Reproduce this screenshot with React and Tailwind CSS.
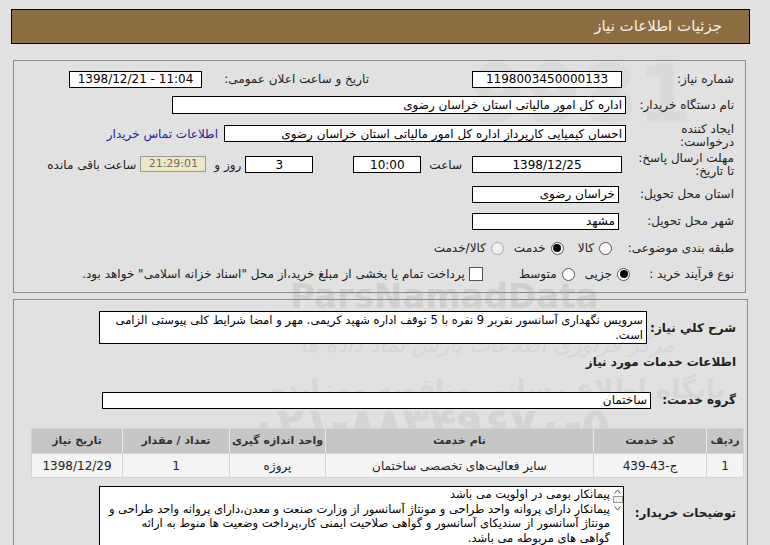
import React from 'react';

const font = { fontFamily: '"DejaVu Sans", Tahoma, sans-serif' };

const Box = ({ w, children, className = '' }) => (
  <div
    className={`h-[17px] bg-white border border-black flex items-center px-[3px] text-[12px] text-black whitespace-nowrap overflow-hidden shrink-0 ${className}`}
    style={{ width: w }}
  >
    {children}
  </div>
);

const Radio = ({ checked, disabled }) => (
  <span
    className={`w-[13px] h-[13px] rounded-full border flex items-center justify-center shrink-0 ${
      disabled ? 'border-[#a8a8a8] bg-[#f0f0f0]' : 'border-[#555] bg-white'
    }`}
  >
    {checked && <span className="w-[8px] h-[8px] rounded-full bg-black" />}
  </span>
);

const Label = ({ children, className = '' }) => (
  <div className={`w-[104px] shrink-0 whitespace-nowrap text-[12px] leading-[13px] text-[#222] ${className}`}>{children}</div>
);

const rows = [
  { name: 'سایر فعالیت‌های تخصصی ساختمان', code: 'ج-43-439', unit: 'پروژه', qty: '1', date: '1398/12/29' },
];

export default function App() {
  return (
    <div className="w-[770px] h-[545px] bg-[#e1e1e1] overflow-hidden relative" style={font}>
      {/* watermark */}
      <div className="absolute inset-0 pointer-events-none select-none" dir="rtl">
        <div className="absolute left-[290px] top-[279px] text-[34px] font-bold text-[#d0d0d0] leading-none" dir="ltr">
          ParsNamadData
        </div>
        <div className="absolute left-[300px] top-[334px] text-[22px] italic text-[#d6d6d6] leading-none">
          مرکز فراوری اطلاعات پارس نماد داده ها
        </div>
        <div className="absolute left-[270px] top-[376px] text-[26px] font-bold text-[#d6d6d6] leading-none">
          پایگاه اطلاع رسانی مناقصه ومزایده
        </div>
        <div className="absolute left-[250px] top-[402px] text-[44px] font-bold text-[#d4d4d4] leading-none" dir="ltr">
          ۰۲۱-۸۸۳۴۹۶۷۰-۵
        </div>
        <div className="absolute left-[470px] top-[55px] text-[80px] font-bold text-[#dadada] leading-none" dir="ltr">
          9981
        </div>
      </div>

      <div className="relative">
        {/* title bar */}
        <div
          dir="rtl"
          className="ml-[11px] mt-[9px] w-[739px] h-[35px] bg-[#8d6e42] border border-black flex items-center pr-[27px] text-[15px] text-[#f5efe4]"
        >
          جزئیات اطلاعات نیاز
        </div>

        {/* panel 1 */}
        <div dir="rtl" className="ml-[13px] mt-[16px] w-[733px] h-[233px] border border-[#8c8c8c] pt-[6px] pr-[11px]">
          {/* row 1 */}
          <div className="h-[24px] flex items-center">
            <Label>شماره نیاز:</Label>
            <Box w={150} className="mr-[8px] justify-center text-[11px]">1198003450000133</Box>
            <div className="mr-[103px] w-[163px] text-[12px] text-[#222]">تاریخ و ساعت اعلان عمومی:</div>
            <Box w={133} className="mr-[4px] justify-center text-[11px]">
              <span dir="ltr">1398/12/21 - 11:04</span>
            </Box>
          </div>
          {/* row 2 */}
          <div className="h-[28px] flex items-center">
            <Label>نام دستگاه خریدار:</Label>
            <Box w={454} className="mr-[4px] h-[18px]">اداره کل امور مالیاتی استان خراسان رضوی</Box>
          </div>
          {/* row 3 */}
          <div className="h-[32px] flex items-start">
            <Label className="mt-[4px]">
              ایجاد کننده
              <br />
              درخواست:
            </Label>
            <Box w={402} className="mr-[4px] mt-[6px] h-[15px]">
              احسان کیمیایی کارپرداز اداره کل امور مالیاتی استان خراسان رضوی
            </Box>
            <span className="mr-[6px] mt-[6px] text-[12px] text-[#2323a5]">اطلاعات تماس خریدار</span>
          </div>
          {/* row 4 */}
          <div className="h-[29px] flex items-start">
            <Label className="mt-[1px]">
              مهلت ارسال پاسخ:
              <br />
              تا تاریخ:
            </Label>
            <Box w={150} className="mr-[8px] mt-[5px] h-[16px] justify-center text-[11px]">1398/12/25</Box>
            <span className="mr-[10px] mt-[5px] text-[12px] text-[#222]">ساعت</span>
            <Box w={68} className="mr-[8px] mt-[5px] h-[16px] justify-center text-[11px]">10:00</Box>
            <Box w={68} className="mr-[40px] mt-[5px] h-[16px] justify-center text-[11px]">3</Box>
            <span className="mr-[4px] mt-[5px] text-[12px] text-[#222]">روز و</span>
            <div className="mr-[8px] mt-[5px] w-[66px] h-[16px] bg-[#efe7c2] border border-[#9a9a9a] flex items-center justify-center text-[11px] text-[#6f6f6f] shrink-0">
              21:29:01
            </div>
            <span className="mr-[4px] mt-[5px] text-[12px] text-[#222]">ساعت باقی مانده</span>
          </div>
          {/* row 5 */}
          <div className="h-[28px] flex items-center">
            <Label>استان محل تحویل:</Label>
            <Box w={147} className="mr-[11px]">خراسان رضوی</Box>
          </div>
          {/* row 6 */}
          <div className="h-[26px] flex items-center">
            <Label>شهر محل تحویل:</Label>
            <Box w={147} className="mr-[11px]">مشهد</Box>
          </div>
          {/* row 7 */}
          <div className="h-[28px] flex items-center text-[12px] text-[#222]">
            <Label>طبقه بندی موضوعی:</Label>
            <span className="mr-[18px]"><Radio /></span>
            <span className="mr-[5px]">کالا</span>
            <span className="mr-[14px]"><Radio checked /></span>
            <span className="mr-[5px]">خدمت</span>
            <span className="mr-[10px]"><Radio disabled /></span>
            <span className="mr-[5px]">کالا/خدمت</span>
          </div>
          {/* row 8 */}
          <div className="h-[24px] flex items-center text-[12px] text-[#222]">
            <Label>نوع فرآیند خرید :</Label>
            <span className="mr-[0px]"><Radio checked /></span>
            <span className="mr-[5px]">جزیی</span>
            <span className="mr-[10px]"><Radio /></span>
            <span className="mr-[5px]">متوسط</span>
            <span className="mr-[36px] w-[14px] h-[14px] bg-white border border-[#555] shrink-0" />
            <span className="mr-[4px] whitespace-nowrap">پرداخت تمام یا بخشی از مبلغ خرید،از محل "اسناد خزانه اسلامی" خواهد بود.</span>
          </div>
        </div>

        {/* panel 2 */}
        <div dir="rtl" className="ml-[13px] mt-[6px] w-[735px] h-[300px] border border-[#8c8c8c] pr-[11px] pt-[11px]">
          <div className="flex items-start">
            <div className="w-[89px] shrink-0 whitespace-nowrap mt-[8px] text-[12px] font-bold text-[#222]">شرح کلي نياز:</div>
            <div className="w-[548px] h-[33px] bg-white border border-black px-[3px] pt-[1px] text-[11.5px] leading-[15px] text-black whitespace-nowrap overflow-hidden">
              سرویس نگهداری آسانسور نفربر 9 نفره با 5 توقف اداره شهید کریمی. مهر و امضا شرایط کلی پیوستی الزامی
              <br />
              است.
            </div>
          </div>
          <div className="h-[28px] mt-[4px] flex items-center text-[12px] font-bold text-[#222]">
            اطلاعات خدمات مورد نیاز
          </div>
          <div className="mt-[15px] flex items-center">
            <div className="w-[85px] shrink-0 whitespace-nowrap text-[12px] font-bold text-[#222]">گروه خدمت:</div>
            <Box w={549}>ساختمان</Box>
          </div>

          {/* table */}
          <div className="mt-[19px] mr-[-8px] w-[713px] border border-[#d4d4d4] bg-[#f4f4f4]">
            <div className="flex h-[24px] bg-[#c6c6c6] text-[11px] font-bold text-[#333]">
              <div className="w-[37px] flex items-center justify-center border-l border-[#e8e8e8]">ردیف</div>
              <div className="w-[113px] flex items-center justify-center border-l border-[#e8e8e8]">کد خدمت</div>
              <div className="w-[268px] flex items-center justify-center border-l border-[#e8e8e8]">نام خدمت</div>
              <div className="w-[96px] flex items-center justify-center border-l border-[#e8e8e8]">واحد اندازه گیری</div>
              <div className="w-[107px] flex items-center justify-center border-l border-[#e8e8e8]">تعداد / مقدار</div>
              <div className="flex-1 flex items-center justify-center">تاریخ نیاز</div>
            </div>
            {rows.map((r) => (
              <div key={r.code} className="flex h-[24px] text-[12px] text-[#222] border-t border-[#d4d4d4]">
                <div className="w-[37px] flex items-center justify-center border-l border-[#d4d4d4]">1</div>
                <div className="w-[113px] flex items-center justify-center border-l border-[#d4d4d4]">{r.code}</div>
                <div className="w-[268px] flex items-center justify-center border-l border-[#d4d4d4]">{r.name}</div>
                <div className="w-[96px] flex items-center justify-center border-l border-[#d4d4d4]">{r.unit}</div>
                <div className="w-[107px] flex items-center justify-center border-l border-[#d4d4d4]">{r.qty}</div>
                <div className="flex-1 flex items-center justify-center">{r.date}</div>
              </div>
            ))}
          </div>

          {/* buyer notes */}
          <div className="mt-[8px] flex items-start">
            <div className="w-[100px] shrink-0 whitespace-nowrap mt-[18px] text-[12px] font-bold text-[#222]">توضیحات خریدار:</div>
            <div className="mr-[12px] w-[525px] h-[80px] bg-white border border-black flex">
              <div className="w-[11px] shrink-0 flex flex-col items-center pt-[2px]">
                <svg width="7" height="5" viewBox="0 0 7 5"><path d="M0.5 4.5 L3.5 1 L6.5 4.5" fill="none" stroke="#555" strokeWidth="1" /></svg>
                <div className="w-[10px] h-[7px] mt-[2px] border border-[#9a9a9a] bg-[#eeeeee]" />
                <svg className="mt-[3px]" width="7" height="5" viewBox="0 0 7 5"><path d="M0.5 0.5 L3.5 4 L6.5 0.5" fill="none" stroke="#555" strokeWidth="1" /></svg>
              </div>
              <div className="flex-1 pr-[2px] text-[11.5px] leading-[14.5px] text-black whitespace-nowrap overflow-hidden">
                پیمانکار بومی در اولویت می باشد
                <br />
                پیمانکار دارای پروانه واحد طراحی و مونتاژ آسانسور از وزارت صنعت و معدن،دارای پروانه واحد طراحی و
                <br />
                مونتاژ آسانسور از سندیکای آسانسور و گواهی صلاحیت ایمنی کار،پرداخت وضعیت ها منوط به ارائه
                <br />
                گواهی های مربوطه می باشد.
              </div>
            </div>
          </div>
        </div>
      </div>
    </div>
  );
}
